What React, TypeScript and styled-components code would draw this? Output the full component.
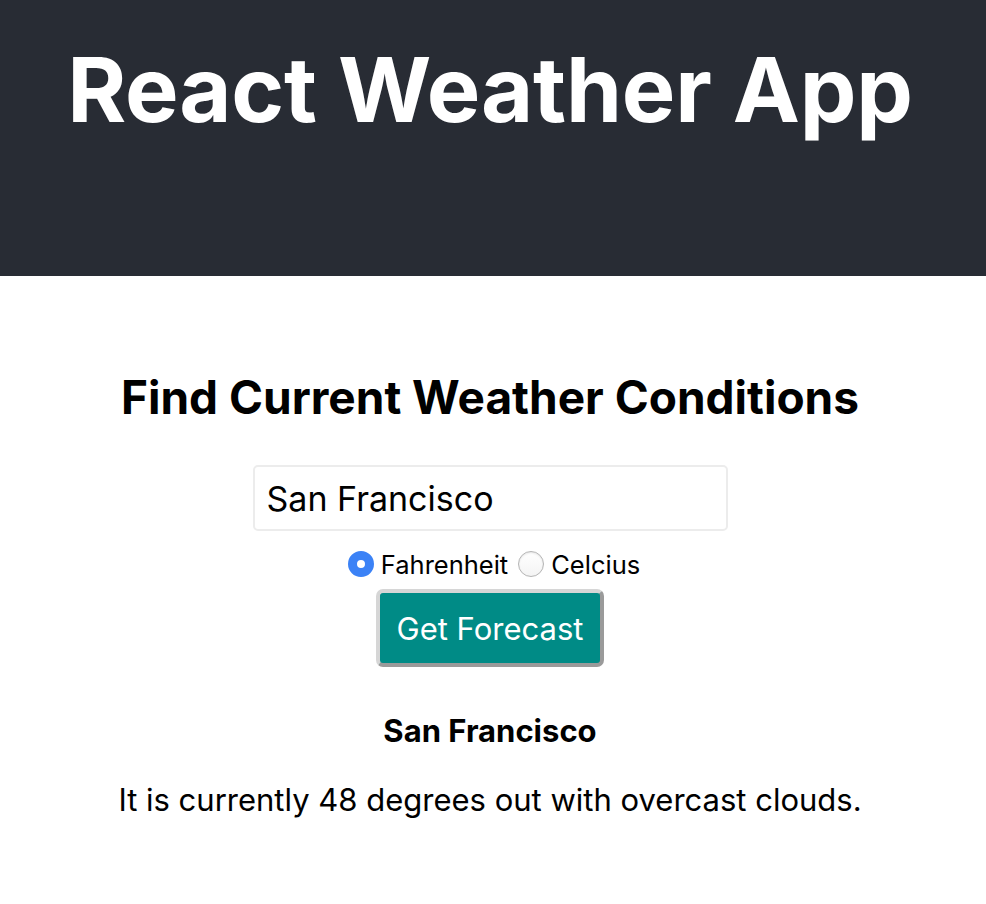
import React, { useState } from "react";
import styled, { createGlobalStyle } from "styled-components";

const GlobalStyle = createGlobalStyle`
  body {
    margin: 0;
    background: #ffffff;
    font-family: Inter, "Noto Sans", sans-serif;
    color: #000;
  }
`;

const Header = styled.header`
  background-color: #282c34;
  height: 276px;
  box-sizing: border-box;
  padding: 36px 6px 0 0;
  display: flex;
  justify-content: center;
`;

const Title = styled.h1`
  margin: 0;
  color: #ffffff;
  font-size: 90px;
  font-weight: 700;
  line-height: 108px;
  letter-spacing: -0.2px;
`;

const Main = styled.main`
  display: flex;
  flex-direction: column;
  align-items: center;
  padding: 94px 6px 0 0;
`;

const Heading = styled.h2`
  margin: 0 0 40px;
  font-size: 46px;
  font-weight: 700;
  line-height: 55px;
`;

const CityInput = styled.input`
  box-sizing: border-box;
  width: 475px;
  height: 66px;
  padding: 0 12px;
  border: 2px solid #ececec;
  border-radius: 5px;
  font-family: inherit;
  font-size: 34px;
  color: #000;
  outline: none;
`;

const UnitRow = styled.div`
  display: flex;
  align-items: center;
  margin-top: 18px;
  padding-left: 8px;
  height: 30px;
  font-size: 25.5px;
`;

const UnitLabel = styled.label`
  display: flex;
  align-items: center;
  margin-right: 10px;

  &:last-child {
    margin-right: 0;
  }
`;

const Radio = styled.input`
  appearance: none;
  box-sizing: border-box;
  width: 26px;
  height: 26px;
  margin: 0 7px 0 0;
  border-radius: 50%;
  border: 1.5px solid #b5b5b5;
  background: linear-gradient(#ffffff, #f4f4f4);
  box-shadow: inset 0 1px 2px rgba(0, 0, 0, 0.1);

  &:checked {
    border: 9px solid #3b82f6;
    background: #fff;
    box-shadow: none;
  }
`;

const ForecastButton = styled.button`
  margin-top: 10px;
  box-sizing: border-box;
  width: 228px;
  height: 78px;
  background: #008b86;
  color: #fff;
  font-family: inherit;
  font-size: 31px;
  border: 4px solid;
  border-color: #d6d6d6 #9a9a9a #9a9a9a #d6d6d6;
  border-radius: 7px;
  cursor: pointer;
`;

const CityName = styled.h3`
  margin: 46px 0 0;
  font-size: 31px;
  font-weight: 700;
  line-height: 36px;
`;

const Summary = styled.p`
  margin: 32px 0 0;
  font-size: 31px;
  line-height: 38px;
`;

const App: React.FC = () => {
  const [city, setCity] = useState("San Francisco");
  const [unit, setUnit] = useState<"imperial" | "metric">("imperial");

  return (
    <>
      <GlobalStyle />
      <Header>
        <Title>React Weather App</Title>
      </Header>
      <Main>
        <Heading>Find Current Weather Conditions</Heading>
        <CityInput value={city} onChange={(e) => setCity(e.target.value)} />
        <UnitRow>
          <UnitLabel>
            <Radio
              type="radio"
              name="unit"
              checked={unit === "imperial"}
              onChange={() => setUnit("imperial")}
            />
            Fahrenheit
          </UnitLabel>
          <UnitLabel>
            <Radio
              type="radio"
              name="unit"
              checked={unit === "metric"}
              onChange={() => setUnit("metric")}
            />
            Celcius
          </UnitLabel>
        </UnitRow>
        <ForecastButton>Get Forecast</ForecastButton>
        <CityName>San Francisco</CityName>
        <Summary>It is currently 48 degrees out with overcast clouds.</Summary>
      </Main>
    </>
  );
};

export default App;
